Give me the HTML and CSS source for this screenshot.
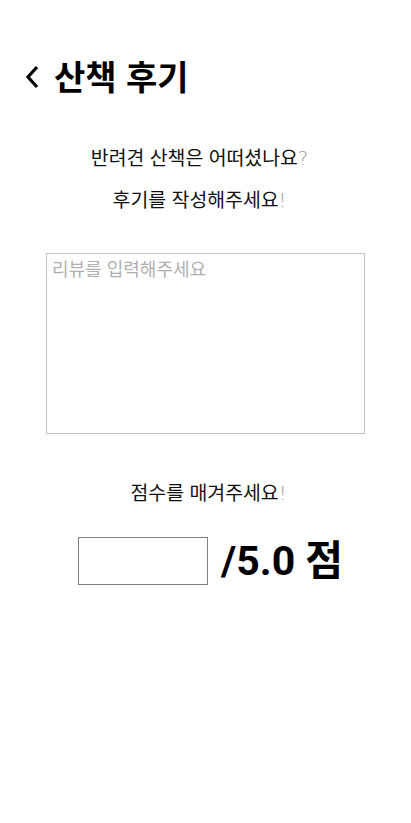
FILE: index.html
```html
<!DOCTYPE html>
<html lang="ko">
<head>
<meta charset="utf-8">
<link rel="stylesheet" href="styles.css">
</head>
<body>
<div class="page">
  <header class="header">
    <svg class="back" width="16" height="26" viewBox="0 0 16 26"><path d="M13 3 L4 13 L13 23" fill="none" stroke="#000" stroke-width="3.2" stroke-linecap="butt"/></svg>
    <h1 class="title">산책 후기</h1>
  </header>
  <section class="intro">
    <p class="line">반려견 산책은 어떠셨나요<span class="punct">?</span></p>
    <p class="line">후기를 작성해주세요<span class="punct">!</span></p>
  </section>
  <textarea class="review" placeholder="리뷰를 입력해주세요"></textarea>
  <p class="line score-label">점수를 매겨주세요<span class="punct">!</span></p>
  <div class="score-row">
    <input class="score-input" type="text">
    <span class="score-max">/5.0 점</span>
  </div>
</div>
</body>
</html>
```

FILE: styles.css
```css
* { box-sizing: border-box; }
html, body { margin: 0; padding: 0; background: #fff; }
body {
  font-family: "Noto Sans CJK KR", "Noto Sans", sans-serif;
  color: #111;
  width: 411px;
}
.page {
  display: flex;
  flex-direction: column;
}
.header {
  display: flex;
  align-items: center;
  padding: 54px 0 0 24px;
  height: 98px;
  gap: 14px;
}
.back { display: block; flex: none; margin-top: 2px; }
.title {
  margin: 0;
  font-size: 34px;
  font-weight: 700;
  line-height: 40px;
  color: #000;
}
.intro {
  display: flex;
  flex-direction: column;
  align-items: center;
  padding-top: 46px;
  gap: 16px;
  padding-right: 12px;
}
.line {
  margin: 0;
  font-size: 19.4px;
  line-height: 26px;
  height: 26px;
  color: #111;
  text-align: center;
}
.punct {
  color: #999;
  font-family: "DejaVu Sans", sans-serif;
  font-weight: 200;
  line-height: 1;
}
.review {
  display: block;
  margin: 41px 0 0 46px;
  width: 319px;
  height: 181px;
  border: 1px solid #c4c4c4;
  padding: 2px 5px;
  font-family: "Noto Sans CJK KR", sans-serif;
  font-size: 18px;
  line-height: 24px;
  resize: none;
  outline: none;
}
.review::placeholder { color: #b0b0b0; }
.score-label {
  margin-top: 45px;
  padding-left: 6px;
}
.score-row {
  display: flex;
  align-items: center;
  margin: 32px 0 0 78px;
  gap: 13px;
}
.score-input {
  width: 130px;
  height: 48px;
  border: 1px solid #808080;
  margin: 0;
  padding: 0;
}
.score-max {
  font-family: "Roboto", "Noto Sans CJK KR", sans-serif;
  font-size: 41px;
  font-weight: 700;
  color: #000;
  line-height: 48px;
}
```
